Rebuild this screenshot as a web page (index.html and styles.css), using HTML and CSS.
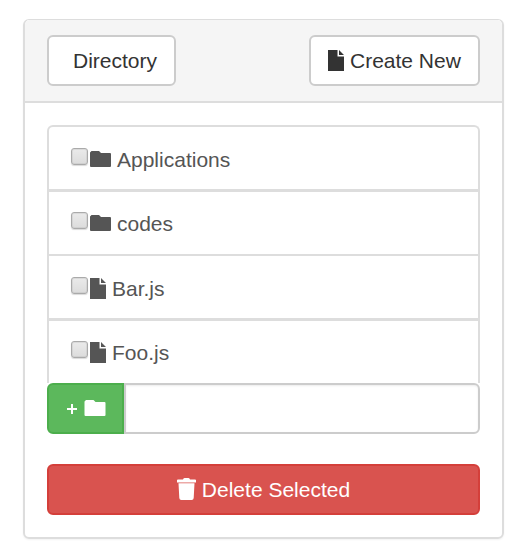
FILE: index.html
```html
<!DOCTYPE html>
<html lang="en">
<head>
<meta charset="utf-8">
<title>Directory</title>
<link rel="stylesheet" href="styles.css">
</head>
<body>
<svg width="0" height="0" class="defs">
  <symbol id="file" viewBox="0 0 16 21"><path d="M0 0H9.5V6.5H16V21H0ZM11 0L16 5H11Z"/></symbol>
  <symbol id="folder" viewBox="0 0 21 16"><path d="M0 15V1.5L1.5 0H9L11 2H20Q21 2 21 3V15Q21 16 20 16H1Q0 16 0 15Z"/></symbol>
  <symbol id="trash" viewBox="0 0 19 22"><path d="M0 2.2Q0 1.5 1 1.5H6Q6.2 0 7.5 0H11.5Q12.8 0 13 1.5H18Q19 1.5 19 2.2V4.5H0ZM1.5 5.2H17.5L16.7 20Q16.5 22 14.7 22H4.3Q2.5 22 2.3 20Z"/></symbol>
</svg>
<section class="panel">
  <header class="panel-heading">
    <button class="btn btn-directory">Directory</button>
    <button class="btn btn-create"><svg class="icon-file"><use href="#file"/></svg><span>Create New</span></button>
  </header>
  <div class="panel-body">
    <ul class="list">
      <li class="item"><input type="checkbox" class="check"><svg class="icon-folder"><use href="#folder"/></svg><span>Applications</span></li>
      <li class="item"><input type="checkbox" class="check"><svg class="icon-folder"><use href="#folder"/></svg><span>codes</span></li>
      <li class="item"><input type="checkbox" class="check"><svg class="icon-file"><use href="#file"/></svg><span>Bar.js</span></li>
      <li class="item"><input type="checkbox" class="check"><svg class="icon-file"><use href="#file"/></svg><span>Foo.js</span></li>
    </ul>
    <div class="input-group">
      <button class="btn btn-add"><svg class="plus" viewBox="0 0 12 12"><path d="M5 1H7V5H11V7H7V11H5V7H1V5H5Z"/></svg><svg class="icon-folder"><use href="#folder"/></svg></button>
      <input type="text" class="name-input">
    </div>
    <button class="btn btn-delete"><svg class="icon-trash"><use href="#trash"/></svg><span>Delete Selected</span></button>
  </div>
</section>
</body>
</html>
```
FILE: styles.css
```css
* { box-sizing: border-box; }
body {
  margin: 0;
  padding: 19px 11px 18px 23px;
  background: #fff;
  color: #333;
  font: 21px/30px "Liberation Sans", Arial, sans-serif;
}
.defs { position: absolute; }
svg { fill: currentColor; flex: none; }
.panel {
  height: 520px;
  border: 2px solid #ddd;
  border-top-width: 1px;
  border-radius: 6px;
  box-shadow: 0 1px 2px rgba(0, 0, 0, .05);
}
.panel-heading {
  display: flex;
  justify-content: space-between;
  height: 83px;
  padding: 15px 22px 0;
  background: #f5f5f5;
  border-bottom: 2px solid #ddd;
  border-radius: 5px 5px 0 0;
}
.btn {
  display: flex;
  align-items: center;
  height: 51px;
  margin: 0;
  padding: 0;
  border: 2px solid #ccc;
  border-radius: 6px;
  background: #fff;
  color: #333;
  font: inherit;
}
.btn-directory { width: 129px; padding-left: 24px; }
.btn-create { width: 171px; padding-left: 17px; gap: 6px; }
.btn-create .icon-file { margin-bottom: 1px; }
.panel-body { padding: 22px 22px 0; }
.list {
  height: 258px;
  margin: 0;
  padding: 0;
  list-style: none;
  border: 2px solid #ddd;
  border-bottom: 0;
  border-radius: 6px 6px 0 0;
}
.item {
  display: flex;
  align-items: flex-start;
  height: 65px;
  padding: 17px 0 0 22px;
  color: #555;
  border-bottom: 3px solid #ddd;
}
.item:nth-child(2) { height: 64px; padding-top: 16px; border-bottom-width: 2px; }
.item:last-child { height: 62px; padding-top: 16px; border-bottom: 0; }
.check {
  appearance: none;
  flex: none;
  width: 17px;
  height: 17px;
  margin: 4px 2px 0 0;
  border: 1px solid #aaa;
  border-radius: 3px;
  background: linear-gradient(#eaeaea, #dcdcdc);
  box-shadow: 0 1px 1px rgba(0, 0, 0, .15), inset 0 0 0 1px rgba(170, 170, 170, .25);
}
.icon-file { width: 16px; height: 21px; }
.icon-folder { width: 21px; height: 16px; }
.icon-trash { width: 19px; height: 22px; margin-bottom: 2px; }
.item .icon-folder { margin-top: 7px; }
.item .icon-file { margin-top: 5px; }
.item span { margin: 1px 0 0 6px; }
.input-group { display: flex; height: 51px; }
.btn-add {
  width: 77px;
  padding-left: 17px;
  gap: 6px;
  color: #fff;
  background: #5cb85c;
  border-color: #4cae4c;
  border-radius: 6px 0 0 6px;
}
.plus { width: 12px; height: 12px; }
.btn-add .icon-folder { width: 22px; margin-bottom: 1px; }
.name-input {
  flex: 1;
  min-width: 0;
  margin: 0;
  border: 2px solid #ccc;
  border-radius: 0 6px 6px 0;
  background: #fff;
  box-shadow: inset 0 1px 2px rgba(0, 0, 0, .075);
}
.btn-delete {
  justify-content: center;
  width: 100%;
  margin-top: 30px;
  gap: 6px;
  color: #fff;
  background: #d9534f;
  border-color: #d43f3a;
}
```
